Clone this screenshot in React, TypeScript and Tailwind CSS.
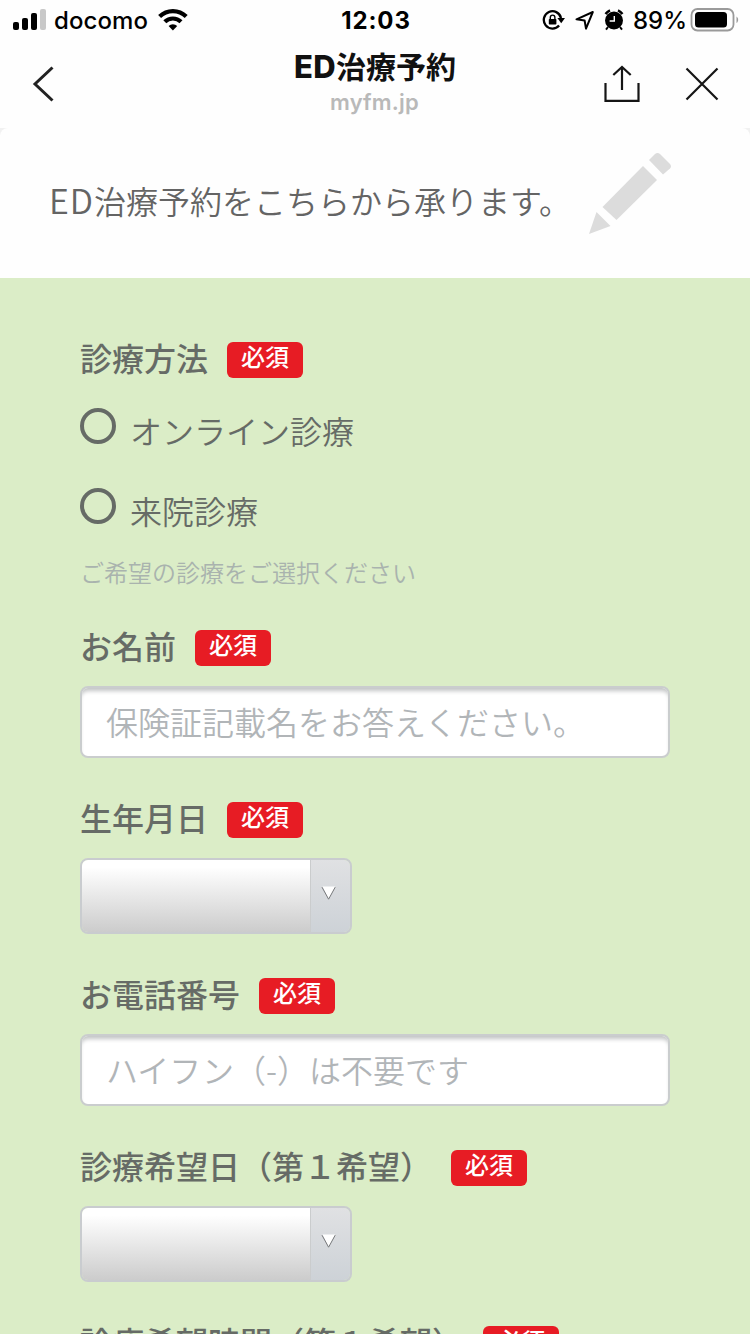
import React from "react";

const JP = "font-['Noto_Sans_CJK_JP',sans-serif]";

function StatusBar() {
  return (
    <div className="flex h-10 items-center justify-between pl-[13px] pr-[11px] text-black">
      <div className="flex w-[300px] items-center">
        <svg width="34" height="22" viewBox="0 0 34 22" className="shrink-0">
          <rect x="0" y="13" width="6" height="8" rx="2" />
          <rect x="9" y="9" width="6" height="12" rx="2" />
          <rect x="18" y="4" width="6" height="17" rx="2" />
          <rect x="27" y="0" width="6" height="21" rx="2" fill="#c8c8c8" />
        </svg>
        <span className="ml-[7px] w-[94px] whitespace-nowrap pt-px font-[Inter,sans-serif] text-[24px] font-medium leading-10 tracking-[0.1px]">docomo</span>
        <svg width="30" height="22" viewBox="0 0 30 22" className="ml-[10px] shrink-0" fill="none" stroke="#000">
          <path d="M1.6 7.6a19 19 0 0 1 26.6 0" strokeWidth="4.2" />
          <path d="M6.8 12.8a11.6 11.6 0 0 1 16.2 0" strokeWidth="4.2" />
          <path d="M10.6 17a6 6 0 0 1 8.6 0L14.9 21.6z" fill="#000" stroke="none" />
        </svg>
      </div>
      <span className="w-[90px] whitespace-nowrap pt-px text-center font-[Inter,sans-serif] text-[24px] font-bold leading-10 tracking-[0.9px]">12:03</span>
      <div className="flex w-[300px] items-center justify-end">
        <svg width="24" height="22" viewBox="0 0 24 22" className="mr-[9px]" fill="none" stroke="#000">
          <path d="M17.1 16.6A8.7 8.7 0 1 1 19 9" strokeWidth="2.3" />
          <path d="M15.4 9h7.6l-3.8 5.2z" fill="#000" stroke="none" />
          <rect x="6.8" y="10" width="7.6" height="5.6" rx="0.8" fill="#000" stroke="none" />
          <path d="M8.3 10.5V8.4a2.3 2.3 0 0 1 4.6 0v2.1" strokeWidth="1.4" />
        </svg>
        <svg width="20" height="20" viewBox="0 0 20 20" className="mr-[9px]" fill="none" stroke="#000" strokeWidth="2" strokeLinejoin="round">
          <path d="M1.5 9.3L17.8 2 11 18.6 9.6 10.5z" />
        </svg>
        <svg width="20" height="22" viewBox="0 0 20 22" className="mr-[9px]">
          <circle cx="10" cy="11.5" r="9" />
          <path d="M10.3 7v5H5.6" fill="none" stroke="#fff" strokeWidth="1.4" />
          <path d="M1.5 5A12 12 0 0 1 6 1.3M14 1.3A12 12 0 0 1 18.5 5" fill="none" stroke="#000" strokeWidth="2.4" />
          <path d="M4 18l-2 2.6M16 18l2 2.6" stroke="#000" strokeWidth="2" />
        </svg>
        <span className="w-[52px] whitespace-nowrap pt-px font-[Inter,sans-serif] text-[24px] font-medium leading-10">89%</span>
        <svg width="49" height="24" viewBox="0 0 49 24" className="ml-[5px]">
          <rect x="1.5" y="1" width="42" height="21.5" rx="6" fill="none" stroke="#9a9a9a" strokeWidth="1.8" />
          <rect x="5" y="4" width="32" height="15.5" rx="3.5" />
          <path d="M46.5 8.5c2.2 1.6 2.2 5 0 6.6z" fill="#9a9a9a" />
        </svg>
      </div>
    </div>
  );
}

function TitleBar() {
  return (
    <div className="flex h-[88px] items-start justify-between pl-8 pr-[30px]">
      <div className="flex w-[120px] pt-[25px]">
        <svg width="24" height="38" viewBox="0 0 24 38" fill="none" stroke="#222" strokeWidth="3">
          <path d="M20.5 2.5L3 19 20.5 35.5" />
        </svg>
      </div>
      <div className="flex flex-col items-center">
        <h1 className="-ml-[2px] flex h-[52px] items-center whitespace-nowrap text-[#111]">
          <span className="pt-[3px] font-[Inter,sans-serif] text-[31px] font-extrabold tracking-[0.4px]">ED</span>
          <span className="-mt-[2px] font-['Noto_Sans_CJK_JP',sans-serif] text-[30px] font-bold">治療予約</span>
        </h1>
        <span className="-ml-[3px] -mt-[4px] font-[Inter,sans-serif] text-[22px] font-semibold leading-[28px] tracking-[0.2px] text-[#b9b9b9]">myfm.jp</span>
      </div>
      <div className="flex w-[120px] justify-end gap-[43px] pt-[25px]">
        <svg width="38" height="38" viewBox="0 0 38 38" fill="none" stroke="#151515" strokeWidth="2.2" className="shrink-0">
          <path d="M2.5 18v17.8h33V18M19 25V2.5M10.3 10l8.7-8 8.7 8" />
        </svg>
        <svg width="36" height="38" viewBox="0 0 36 38" fill="none" stroke="#151515" strokeWidth="2.2" className="shrink-0">
          <path d="M2.5 3.5l31 31M33.5 3.5l-31 31" />
        </svg>
      </div>
    </div>
  );
}

function Field({ label, children }: { label: string; children?: React.ReactNode }) {
  return (
    <section className="mb-11">
      <div className="mb-5 flex h-9 items-center">
        <h2 className="-mt-[7px] whitespace-nowrap text-[32px] font-medium leading-9 text-[#666b66]">{label}</h2>
        <span className="ml-[19px] flex h-9 w-[76px] shrink-0 justify-center rounded-md bg-[#e71c24] text-[24px] font-medium leading-[28px] text-white">
          必須
        </span>
      </div>
      {children}
    </section>
  );
}

function Radio({ label }: { label: string }) {
  return (
    <label className="flex h-20 items-start">
      <span className="h-9 w-9 rounded-full border-4 border-[#666b66]" />
      <span className="ml-[14px] mt-[2px] text-[32px] font-[350] leading-10 text-[#666b66]">{label}</span>
    </label>
  );
}

function TextInput({ placeholder }: { placeholder: string }) {
  return (
    <div className="flex h-[72px] items-center rounded-lg border-2 border-[#cacdce] bg-white pl-6 shadow-[inset_0_5px_4px_-2px_#c2c4c5]">
      <span className="-mt-[2px] text-[32px] font-[350] leading-[68px] text-[#b1b5b8]">{placeholder}</span>
    </div>
  );
}

function Select() {
  return (
    <div className="flex h-[76px] w-[272px] overflow-hidden rounded-lg border-2 border-[#c9cccf]">
      <div className="flex-1 bg-linear-to-b from-white from-10% to-[#cccccc]" />
      <div className="flex w-10 items-center justify-center border-l border-[#cacccd] bg-linear-to-b from-[#e0e1e3] to-[#cdd2d7]">
        <svg width="16" height="16" viewBox="0 0 16 16" className="-ml-[3px] -mt-[6px]">
          <path d="M1.5 1.5h12.6L7.8 14z" fill="#fff" />
          <path d="M1 2.2L7.6 14.2 14.2 2.2" fill="none" stroke="#77797b" strokeWidth="1" />
        </svg>
      </div>
    </div>
  );
}

export default function App() {
  return (
    <div className={`flex h-[1334px] w-[750px] flex-col overflow-hidden bg-[#fefefe] ${JP}`}>
      <header className="h-32 shrink-0 bg-[#fefefe]">
        <StatusBar />
        <TitleBar />
      </header>
      <div className="shrink-0 bg-[#f1f1f1]">
        <div className="flex h-[150px] items-center justify-between rounded-t-lg bg-[#fefefe] pl-[49px] pr-[78px]">
          <p className="-mt-[6px] whitespace-nowrap text-[32px] font-[350] leading-[48px] text-[#646464]">
            <span className="text-[34px] tracking-[1px]">ED</span>治療予約をこちらから承ります。
          </p>
          <svg width="84" height="84" viewBox="0 0 84 84" fill="#dcdcdc" className="-ml-8 -mt-[18px] shrink-0">
            <path d="M1 82L8.5 60 22.5 74z" />
            <path d="M14.5 55L55 14 69 28 28.5 68z" />
            <path d="M61 8l6-6q2.5-2 5 0l10 10q2 2.5 0 4.5l-7 6z" />
          </svg>
        </div>
      </div>
      <main className="flex-1 overflow-hidden bg-[#dbedc7] px-20 pt-16">
        <Field label="診療方法">
          <div className="h-[188px] pt-[10px]">
            <Radio label="オンライン診療" />
            <Radio label="来院診療" />
            <p className="-mt-[14px] text-[24px] font-[350] leading-9 text-[#a9b3ae]">ご希望の診療をご選択ください</p>
          </div>
        </Field>
        <Field label="お名前">
          <TextInput placeholder="保険証記載名をお答えください。" />
        </Field>
        <Field label="生年月日">
          <Select />
        </Field>
        <Field label="お電話番号">
          <TextInput placeholder="ハイフン（-）は不要です" />
        </Field>
        <Field label="診療希望日（第１希望）">
          <Select />
        </Field>
        <Field label="診療希望時間（第１希望）" />
      </main>
    </div>
  );
}
